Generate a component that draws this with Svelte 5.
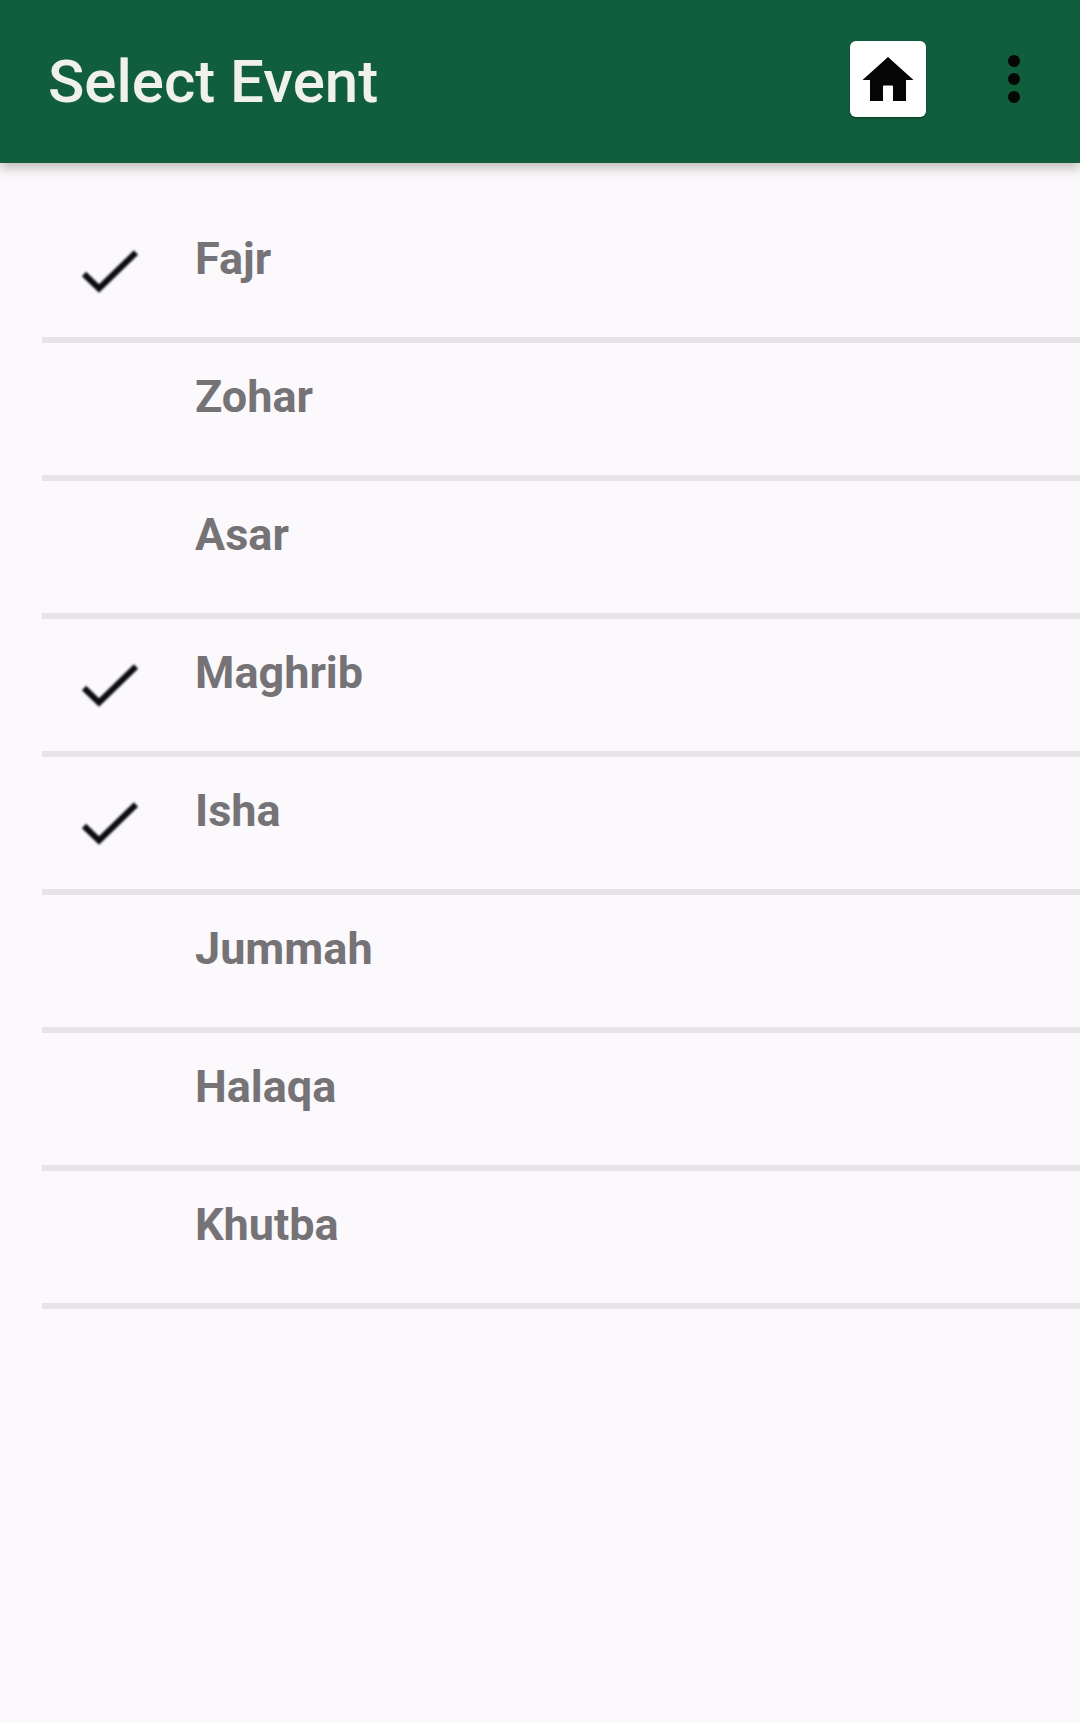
<script lang="ts">
    let events = $state([
        { name: "Fajr", selected: true },
        { name: "Zohar", selected: false },
        { name: "Asar", selected: false },
        { name: "Maghrib", selected: true },
        { name: "Isha", selected: true },
        { name: "Jummah", selected: false },
        { name: "Halaqa", selected: false },
        { name: "Khutba", selected: false },
    ]);
</script>

<header>
    <h1>Select Event</h1>
    <div class="actions">
        <button class="home" aria-label="Home">
            <svg viewBox="0 0 76 76">
                <path d="M38 16 L63.5 39 H56 V60 H43 V45.5 Q43 44.5 42 44.5 H34 Q33 44.5 33 45.5 V60 H20 V39 H12.5 Z" />
            </svg>
        </button>
        <button class="more" aria-label="More options">
            <svg viewBox="0 0 76 76">
                <circle cx="38" cy="20" r="6" />
                <circle cx="38" cy="38" r="6" />
                <circle cx="38" cy="56" r="6" />
            </svg>
        </button>
    </div>
</header>

<main>
    <ul>
        {#each events as event}
            <li>
                <label>
                    <span class="tick">
                        <input type="checkbox" bind:checked={event.selected} />
                        {#if event.selected}
                            <svg viewBox="0 0 64 64">
                                <path d="M6 34 L21 48.5 L58 12.5" />
                            </svg>
                        {/if}
                    </span>
                    <span class="name">{event.name}</span>
                </label>
            </li>
        {/each}
    </ul>
</main>

<style>
    :global(body) {
        background-color: #fbf9fc;
        font-family: Roboto, "Liberation Sans", sans-serif;
    }
    header {
        box-sizing: border-box;
        min-height: 163px;
        padding: 0 28px 0 48px;
        display: flex;
        justify-content: space-between;
        align-items: center;
        background-color: #115e3c;
        box-shadow: 0 5px 11px rgba(40, 30, 10, 0.28);
    }
    h1 {
        margin: 0;
        font-size: 60px;
        line-height: 70px;
        font-weight: 500;
        color: #f0f1ec;
    }
    .actions {
        display: flex;
        gap: 50px;
        padding-bottom: 5px;
    }
    button {
        width: 76px;
        height: 76px;
        padding: 0;
        border: none;
        background: none;
        cursor: pointer;
    }
    .home {
        border-radius: 6px;
        background-color: #fff;
        box-shadow: 0 1px 2px rgba(0, 0, 0, 0.4);
    }
    svg {
        display: block;
        width: 100%;
        height: 100%;
    }
    .home path,
    .more circle {
        fill: #060606;
    }
    main {
        padding: 42px 0 0 42px;
    }
    ul {
        margin: 0;
        padding: 0;
        list-style: none;
    }
    li {
        border-bottom: 6px solid #e6e4e7;
    }
    label {
        display: flex;
        align-items: flex-start;
        gap: 53px;
        padding: 27px 36px 33px;
        cursor: pointer;
    }
    .tick {
        position: relative;
        flex: none;
        width: 64px;
        height: 64px;
        margin-top: 8px;
    }
    .tick input {
        position: absolute;
        inset: 0;
        width: 100%;
        height: 100%;
        margin: 0;
        opacity: 0;
    }
    .tick path {
        fill: none;
        stroke: #0c0b0d;
        stroke-width: 6;
        filter: blur(1px);
    }
    .name {
        font-size: 45px;
        line-height: 54px;
        font-weight: 700;
        color: #757376;
    }
</style>
